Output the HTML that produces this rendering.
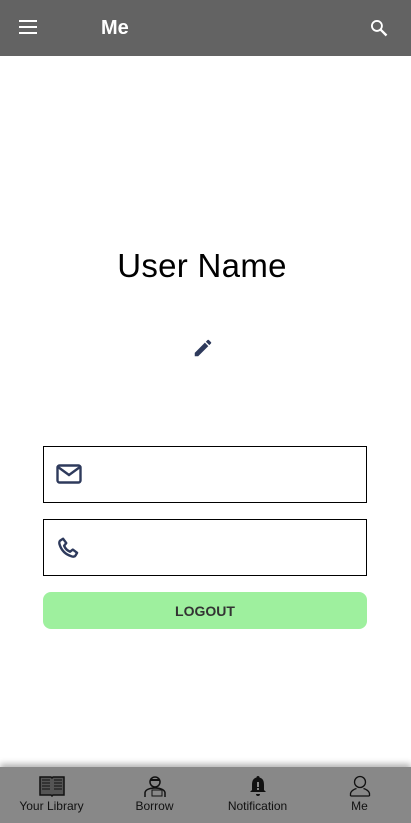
<!DOCTYPE html><html><head><style>
body{margin:0;width:411px;height:823px;position:relative;background:#fff;font-family:"Liberation Sans",sans-serif;overflow:hidden}
.top{position:absolute;left:0;top:0;width:411px;height:56px;background:#636363}
.title{position:absolute;left:101px;top:17px;color:#fff;font-size:20px;font-weight:bold}
.name{position:absolute;left:0;width:404px;top:247px;text-align:center;font-size:33px;color:#000;letter-spacing:0.3px}
.box{position:absolute;left:43px;width:322px;height:55px;border:1px solid #000}
.btn{position:absolute;left:43px;top:592px;width:324px;height:37px;background:#9ef09e;border-radius:8px;text-align:center;line-height:38px;font-weight:bold;font-size:14px;color:#333}
.nav{position:absolute;left:0;top:767px;width:411px;height:56px;background:#888;box-shadow:0 -3px 6px rgba(0,0,0,.3)}
.it{position:absolute;top:0;width:103px;text-align:center;font-size:12px;color:#111}
.it svg{display:block;margin:8px auto 2px}
</style></head><body>
<div class="top">
<svg style="position:absolute;left:18px;top:19px" width="20" height="16" viewBox="0 0 20 16"><path d="M1 2h18M1 8h18M1 14h18" stroke="#fff" stroke-width="2"/></svg>
<div class="title">Me</div>
<svg style="position:absolute;left:369px;top:18px" width="20" height="20" viewBox="0 0 24 24"><circle cx="9.5" cy="9.5" r="6" stroke="#fff" stroke-width="2.2" fill="none"/><path d="M14 14l7 7" stroke="#fff" stroke-width="2.8"/></svg>
</div>
<div class="name">User Name</div>
<svg style="position:absolute;left:192px;top:337px" width="22" height="22" viewBox="0 0 24 24"><path d="M3 17.25V21h3.75L17.8 9.94l-3.75-3.75L3 17.25zM20.7 7.04a1 1 0 000-1.41l-2.34-2.34a1 1 0 00-1.41 0l-1.83 1.83 3.75 3.75 1.83-1.83z" fill="#2e3a5c"/></svg>
<div class="box" style="top:446px"><svg style="position:absolute;left:12px;top:17px" width="26" height="20" viewBox="0 0 26 20"><rect x="1.5" y="1.5" width="23" height="17" rx="2" stroke="#2e3a5c" stroke-width="2.4" fill="none"/><path d="M2 3l11 8 11-8" stroke="#2e3a5c" stroke-width="2.4" fill="none"/></svg></div>
<div class="box" style="top:519px"><svg style="position:absolute;left:12px;top:16px" width="26" height="26" viewBox="0 0 24 24"><path d="M6.5 2.5l3 4-2 2.5c1 2.5 3 4.5 5.5 5.5l2.5-2 4 3-1.5 2.5c-.5 1-2 1.2-3.5.8C8.5 17 5 13.5 3.2 7.5c-.4-1.5 0-3 1-3.5z" stroke="#2e3a5c" stroke-width="2.2" fill="none" stroke-linejoin="round"/></svg></div>
<div class="btn">LOGOUT</div>
<div class="nav">
<div class="it" style="left:0"><svg width="26" height="22" viewBox="0 0 26 22"><path d="M1 2h11l1 1 1-1h11v18H14l-1 1-1-1H1z" fill="#555" stroke="#111" stroke-width="1.5"/><path d="M3 5h8M3 8h8M3 11h8M3 14h8M15 5h8M15 8h8M15 11h8M15 14h8" stroke="#111"/></svg>Your Library</div>
<div class="it" style="left:103px"><svg width="26" height="22" viewBox="0 0 26 22"><circle cx="13" cy="7" r="5" fill="none" stroke="#111" stroke-width="1.5"/><path d="M8 5h10" stroke="#111" stroke-width="2"/><path d="M3 22v-4c0-3 4-5 10-5s10 2 10 5v4" fill="none" stroke="#111" stroke-width="1.5"/><rect x="10" y="15" width="10" height="6" fill="none" stroke="#111"/></svg>Borrow</div>
<div class="it" style="left:206px"><svg width="22" height="22" viewBox="0 0 22 22"><path d="M11 1c1 0 1.5.6 1.5 1.5C16 3.5 17 6 17 10v5l2 2H3l2-2v-5c0-4 1-6.5 4.5-7.5C9.5 1.6 10 1 11 1zM9 19h4a2 2 0 01-4 0z" fill="#111"/><rect x="10" y="7" width="2" height="5" fill="#888"/><rect x="10" y="13" width="2" height="2" fill="#888"/></svg>Notification</div>
<div class="it" style="left:308px"><svg width="22" height="22" viewBox="0 0 22 22"><circle cx="11" cy="7" r="5.5" fill="none" stroke="#111" stroke-width="1.3"/><path d="M1.5 21v-2c0-3 4-5 6-5.5M20.5 21v-2c0-3-4-5-6-5.5M1.5 21h19" fill="none" stroke="#111" stroke-width="1.3"/></svg>Me</div>
</div>
</body></html>
